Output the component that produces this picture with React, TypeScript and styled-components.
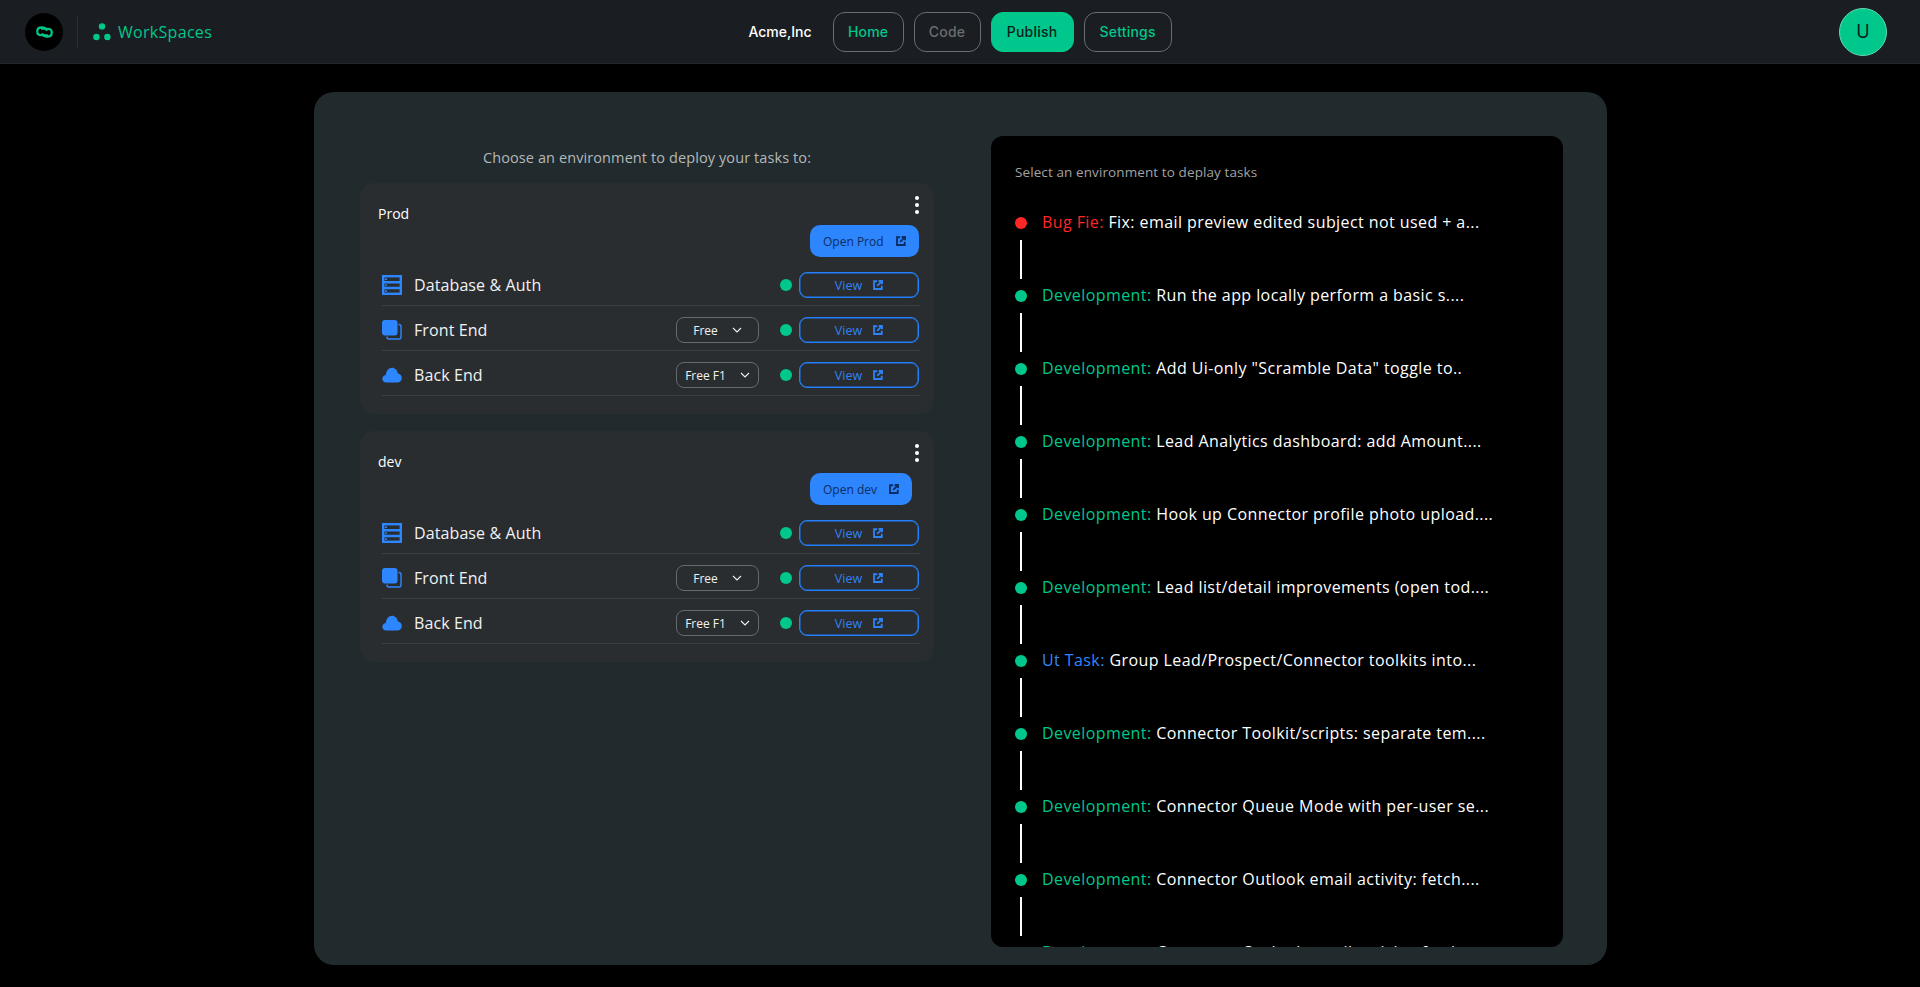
import React from 'react';
import styled, { createGlobalStyle } from 'styled-components';

const green = '#00c78b';
const blue = '#2e86ff';
const plex = '"Open Sans", "Noto Sans", sans-serif';
const work = 'Inter, "Open Sans", sans-serif';

const GlobalStyle = createGlobalStyle`
  html, body {
    margin: 0;
    height: 100%;
    background: #000;
    overflow: hidden;
  }
  * { box-sizing: border-box; }
`;

const Page = styled.div`
  height: 987px;
  display: flex;
  flex-direction: column;
  background: #000;
  font-family: ${plex};
  color: #fff;
`;

const Header = styled.header`
  height: 64px;
  flex: none;
  display: grid;
  grid-template-columns: 1fr auto 1fr;
  align-items: center;
  padding: 0 25px;
  background: #1a1d21;
  border-bottom: 1px solid #22262a;
`;

const Brand = styled.div`
  display: flex;
  align-items: center;
`;

const LogoCircle = styled.div`
  width: 38px;
  height: 38px;
  border-radius: 50%;
  background: #000;
  display: flex;
  align-items: center;
  justify-content: center;
`;

const Divider = styled.div`
  width: 1px;
  height: 32px;
  margin: 0 15px 0 14px;
  background: #2a2e32;
`;

const WorkspaceName = styled.span`
  margin-left: 7px;
  font-size: 16px;
  letter-spacing: 0.3px;
  color: ${green};
`;

const Nav = styled.nav`
  display: flex;
  align-items: center;
  gap: 10px;
  font-family: ${work};
`;

const OrgName = styled.span`
  margin-right: 11px;
  font-size: 14px;
  font-weight: 500;
  color: #fff;
`;

const NavButton = styled.button<{ $kind?: 'active' | 'muted'; $width: number }>`
  width: ${(p) => p.$width}px;
  height: 40px;
  border-radius: 12px;
  border: 1px solid ${(p) => (p.$kind === 'active' ? green : '#6a6d70')};
  background: ${(p) => (p.$kind === 'active' ? green : 'transparent')};
  color: ${(p) => (p.$kind === 'active' ? '#0a1f18' : p.$kind === 'muted' ? '#6a6d70' : green)};
  font-family: inherit;
  font-size: 14px;
  font-weight: 500;
  letter-spacing: 0.2px;
  padding: 0;
`;

const AvatarSlot = styled.div`
  display: flex;
  justify-content: flex-end;
  padding-right: 8px;
`;

const Avatar = styled.div`
  width: 48px;
  height: 48px;
  border-radius: 50%;
  background: ${green};
  border: 1px solid #5fdcb4;
  display: flex;
  align-items: center;
  justify-content: center;
  color: #06231a;
  font-family: ${work};
  font-size: 18px;
`;

const Panel = styled.main`
  width: 1293px;
  height: 873px;
  margin: 28px 0 0 314px;
  padding: 44px 43px 18px 46px;
  border-radius: 20px;
  background: #212a2c;
  display: grid;
  grid-template-columns: 574px 572px;
  column-gap: 57px;
`;

const LeftColumn = styled.section`
  display: flex;
  flex-direction: column;
  gap: 17px;
`;

const Intro = styled.p`
  margin: 0;
  height: 30px;
  padding-top: 12px;
  text-align: center;
  font-size: 14.5px;
  line-height: 20px;
  letter-spacing: 0.1px;
  color: #b4b8b9;
`;

const EnvCard = styled.div`
  height: 231px;
  padding: 13px 15px 0 18px;
  border-radius: 14px;
  background: #2a2d30;
`;

const EnvHead = styled.div`
  display: flex;
  justify-content: space-between;
  align-items: flex-start;
`;

const EnvName = styled.span`
  margin-top: 8px;
  font-size: 14px;
  line-height: 20px;
`;

const EnvActions = styled.div`
  width: 109px;
  display: flex;
  flex-direction: column;
  gap: 11px;
`;

const KebabSlot = styled.div`
  align-self: flex-end;
  height: 18px;
  line-height: 0;
`;

const OpenButton = styled.button`
  align-self: flex-start;
  height: 32px;
  display: flex;
  align-items: center;
  gap: 12px;
  padding: 0 13px;
  border: 0;
  border-radius: 10px;
  background: ${blue};
  color: #0b2d63;
  font-family: inherit;
  font-size: 12px;
  white-space: nowrap;
`;

const Rows = styled.div`
  margin: 4px -1px 0 4px;
`;

const Row = styled.div`
  display: flex;
  align-items: center;
  height: 45px;
  padding: 11px 1px 7px 0;
  border-bottom: 1px solid #3c3f42;
`;

const RowIcon = styled.div`
  width: 20px;
  height: 20px;
  flex: none;
  display: flex;
  align-items: center;
  justify-content: center;
`;

const RowLabel = styled.span`
  margin-left: 12px;
  flex: 1;
  font-size: 16px;
  letter-spacing: 0.1px;
  color: #f1f2f2;
`;

const PlanSelect = styled.div`
  width: 83px;
  height: 26px;
  margin-right: 21px;
  display: flex;
  align-items: center;
  justify-content: center;
  gap: 14px;
  border: 1px solid #666a6d;
  border-radius: 8px;
  font-size: 12px;
  color: #f1f2f2;
`;

const StatusDot = styled.span`
  width: 12px;
  height: 12px;
  margin-right: 7px;
  flex: none;
  border-radius: 50%;
  background: ${green};
`;

const ViewButton = styled.button`
  width: 120px;
  height: 26px;
  display: flex;
  align-items: center;
  justify-content: center;
  gap: 11px;
  padding: 0;
  border: 1px solid #2281ff;
  box-shadow: inset 0 0 0 0.5px #1f78f5;
  border-radius: 8px;
  background: transparent;
  color: #2f82f5;
  font-family: inherit;
  font-size: 12.5px;
`;

const TaskBox = styled.section`
  height: 811px;
  padding: 26px 24px 0;
  border-radius: 12px;
  background: #000;
  overflow: hidden;
`;

const TaskIntro = styled.p`
  margin: 0 0 24px;
  font-size: 13.5px;
  line-height: 20px;
  letter-spacing: 0.1px;
  color: #a3a3a3;
`;

const TaskRow = styled.div`
  height: 34px;
  display: flex;
  align-items: center;
  gap: 15px;
  white-space: nowrap;
  font-size: 16px;
  font-weight: 500;
  letter-spacing: 0.42px;
`;

const TaskText = styled.span`
  padding-bottom: 2px;
`;

const TaskDot = styled.span<{ $color: string }>`
  width: 12px;
  height: 12px;
  flex: none;
  border-radius: 50%;
  background: ${(p) => p.$color};
`;

const TaskType = styled.span<{ $color: string }>`
  color: ${(p) => p.$color};
`;

const Connector = styled.div`
  width: 2px;
  height: 39px;
  margin-left: 5px;
  background: #fff;
`;

const LogoIcon = () => (
  <svg width="19" height="12" viewBox="0 0 20 14" fill="none" stroke={green} strokeWidth="2.6" strokeLinecap="round">
    <path d="M12.5 4.4C11 2.2 9.2 1.6 6.8 1.6 3.6 1.6 1.5 3.6 1.5 6.4c0 2.6 2.1 4.4 5 4.4h6.6" />
    <path d="M7.5 9.6c1.5 2.2 3.3 2.8 5.7 2.8 3.2 0 5.3-2 5.3-4.8 0-2.6-2.1-4.4-5-4.4H6.9" />
  </svg>
);

const DotsIcon = () => (
  <svg width="18" height="18" viewBox="0 0 18 18" fill={green}>
    <circle cx="9" cy="3.4" r="3.2" />
    <circle cx="3.4" cy="14" r="3.2" />
    <circle cx="14.4" cy="14" r="3.2" />
  </svg>
);

const KebabIcon = () => (
  <svg width="4" height="18" viewBox="0 0 4 18" fill="#fff">
    <circle cx="2" cy="2" r="2" />
    <circle cx="2" cy="9" r="2" />
    <circle cx="2" cy="16" r="2" />
  </svg>
);

const ExternalIcon = () => (
  <svg width="10" height="10" viewBox="0 0 12 12" fill="none" stroke="currentColor" strokeWidth="2.2">
    <path d="M5 1.5H1.2v9.3h9.3V7" />
    <path d="M5 7l5.6-5.6M6.8 1.2h4v4" />
  </svg>
);

const ChevronIcon = () => (
  <svg width="10" height="6" viewBox="0 0 10 6" fill="none" stroke="#f1f2f2" strokeWidth="1.1">
    <path d="M1 1l4 4 4-4" />
  </svg>
);

const DatabaseIcon = () => (
  <svg width="20" height="20" viewBox="0 0 20 20" fill="none" stroke={blue} strokeWidth="2.4">
    <rect x="1.2" y="1.2" width="17.6" height="17.6" />
    <path d="M1 7.3h18M1 13h18" />
    <path d="M3 4.2h2M3 10.1h2M3 16h2" strokeWidth="1.4" />
  </svg>
);

const FrontEndIcon = () => (
  <svg width="20" height="20" viewBox="0 0 20 20" fill="none">
    <rect x="0" y="0" width="15.5" height="15.5" rx="3" fill={blue} />
    <path d="M16.5 4.5H17a2 2 0 0 1 2 2V17a2 2 0 0 1-2 2H7a2 2 0 0 1-2-2v-.5" stroke={blue} strokeWidth="1.4" />
  </svg>
);

const CloudIcon = () => (
  <svg width="20" height="16" viewBox="0 0 20 16" fill={blue}>
    <path d="M4.4 15.5C2 15.5.3 13.8.3 11.7c0-2 1.5-3.6 3.5-3.8C4.5 3.6 6.8.8 10 .8c2.9 0 5.2 2.2 5.9 5.7 2.2.3 3.9 2.2 3.9 4.5 0 2.5-1.9 4.5-4.3 4.5H4.4z" />
  </svg>
);

type Service = { name: string; icon: React.ReactNode; plan?: string };

const services: Service[] = [
  { name: 'Database & Auth', icon: <DatabaseIcon /> },
  { name: 'Front End', icon: <FrontEndIcon />, plan: 'Free' },
  { name: 'Back End', icon: <CloudIcon />, plan: 'Free F1' },
];

const Environment = ({ name }: { name: string }) => (
  <EnvCard>
    <EnvHead>
      <EnvName>{name}</EnvName>
      <EnvActions>
        <KebabSlot>
          <KebabIcon />
        </KebabSlot>
        <OpenButton>
          Open {name}
          <ExternalIcon />
        </OpenButton>
      </EnvActions>
    </EnvHead>
    <Rows>
      {services.map((s) => (
        <Row key={s.name}>
          <RowIcon>{s.icon}</RowIcon>
          <RowLabel>{s.name}</RowLabel>
          {s.plan && (
            <PlanSelect>
              {s.plan}
              <ChevronIcon />
            </PlanSelect>
          )}
          <StatusDot />
          <ViewButton>
            View
            <ExternalIcon />
          </ViewButton>
        </Row>
      ))}
    </Rows>
  </EnvCard>
);

const tasks = [
  { type: 'Bug Fie:', color: '#ff2626', text: 'Fix: email preview edited subject not used + a...' },
  { type: 'Development:', color: green, text: 'Run the app locally perform a basic s....' },
  { type: 'Development:', color: green, text: 'Add Ui-only "Scramble Data" toggle to..' },
  { type: 'Development:', color: green, text: 'Lead Analytics dashboard: add Amount....' },
  { type: 'Development:', color: green, text: 'Hook up Connector profile photo upload....' },
  { type: 'Development:', color: green, text: 'Lead list/detail improvements (open tod....' },
  { type: 'Ut Task:', color: blue, text: 'Group Lead/Prospect/Connector toolkits into...' },
  { type: 'Development:', color: green, text: 'Connector Toolkit/scripts: separate tem....' },
  { type: 'Development:', color: green, text: 'Connector Queue Mode with per-user se...' },
  { type: 'Development:', color: green, text: 'Connector Outlook email activity: fetch....' },
  { type: 'Development:', color: green, text: 'Connector Outlook email activity: fetch....' },
];

export default function App() {
  return (
    <Page>
      <GlobalStyle />
      <Header>
        <Brand>
          <LogoCircle>
            <LogoIcon />
          </LogoCircle>
          <Divider />
          <DotsIcon />
          <WorkspaceName>WorkSpaces</WorkspaceName>
        </Brand>
        <Nav>
          <OrgName>Acme,Inc</OrgName>
          <NavButton $width={71}>Home</NavButton>
          <NavButton $width={67} $kind="muted">Code</NavButton>
          <NavButton $width={83} $kind="active">Publish</NavButton>
          <NavButton $width={88}>Settings</NavButton>
        </Nav>
        <AvatarSlot>
          <Avatar>U</Avatar>
        </AvatarSlot>
      </Header>
      <Panel>
        <LeftColumn>
          <Intro>Choose an environment to deploy your tasks to:</Intro>
          <Environment name="Prod" />
          <Environment name="dev" />
        </LeftColumn>
        <TaskBox>
          <TaskIntro>Select an environment to deplay tasks</TaskIntro>
          {tasks.map((t, i) => (
            <React.Fragment key={i}>
              <TaskRow>
                <TaskDot $color={t.color === blue ? green : t.color} />
                <TaskText>
                  <TaskType $color={t.color}>{t.type}</TaskType> {t.text}
                </TaskText>
              </TaskRow>
              <Connector />
            </React.Fragment>
          ))}
        </TaskBox>
      </Panel>
    </Page>
  );
}
